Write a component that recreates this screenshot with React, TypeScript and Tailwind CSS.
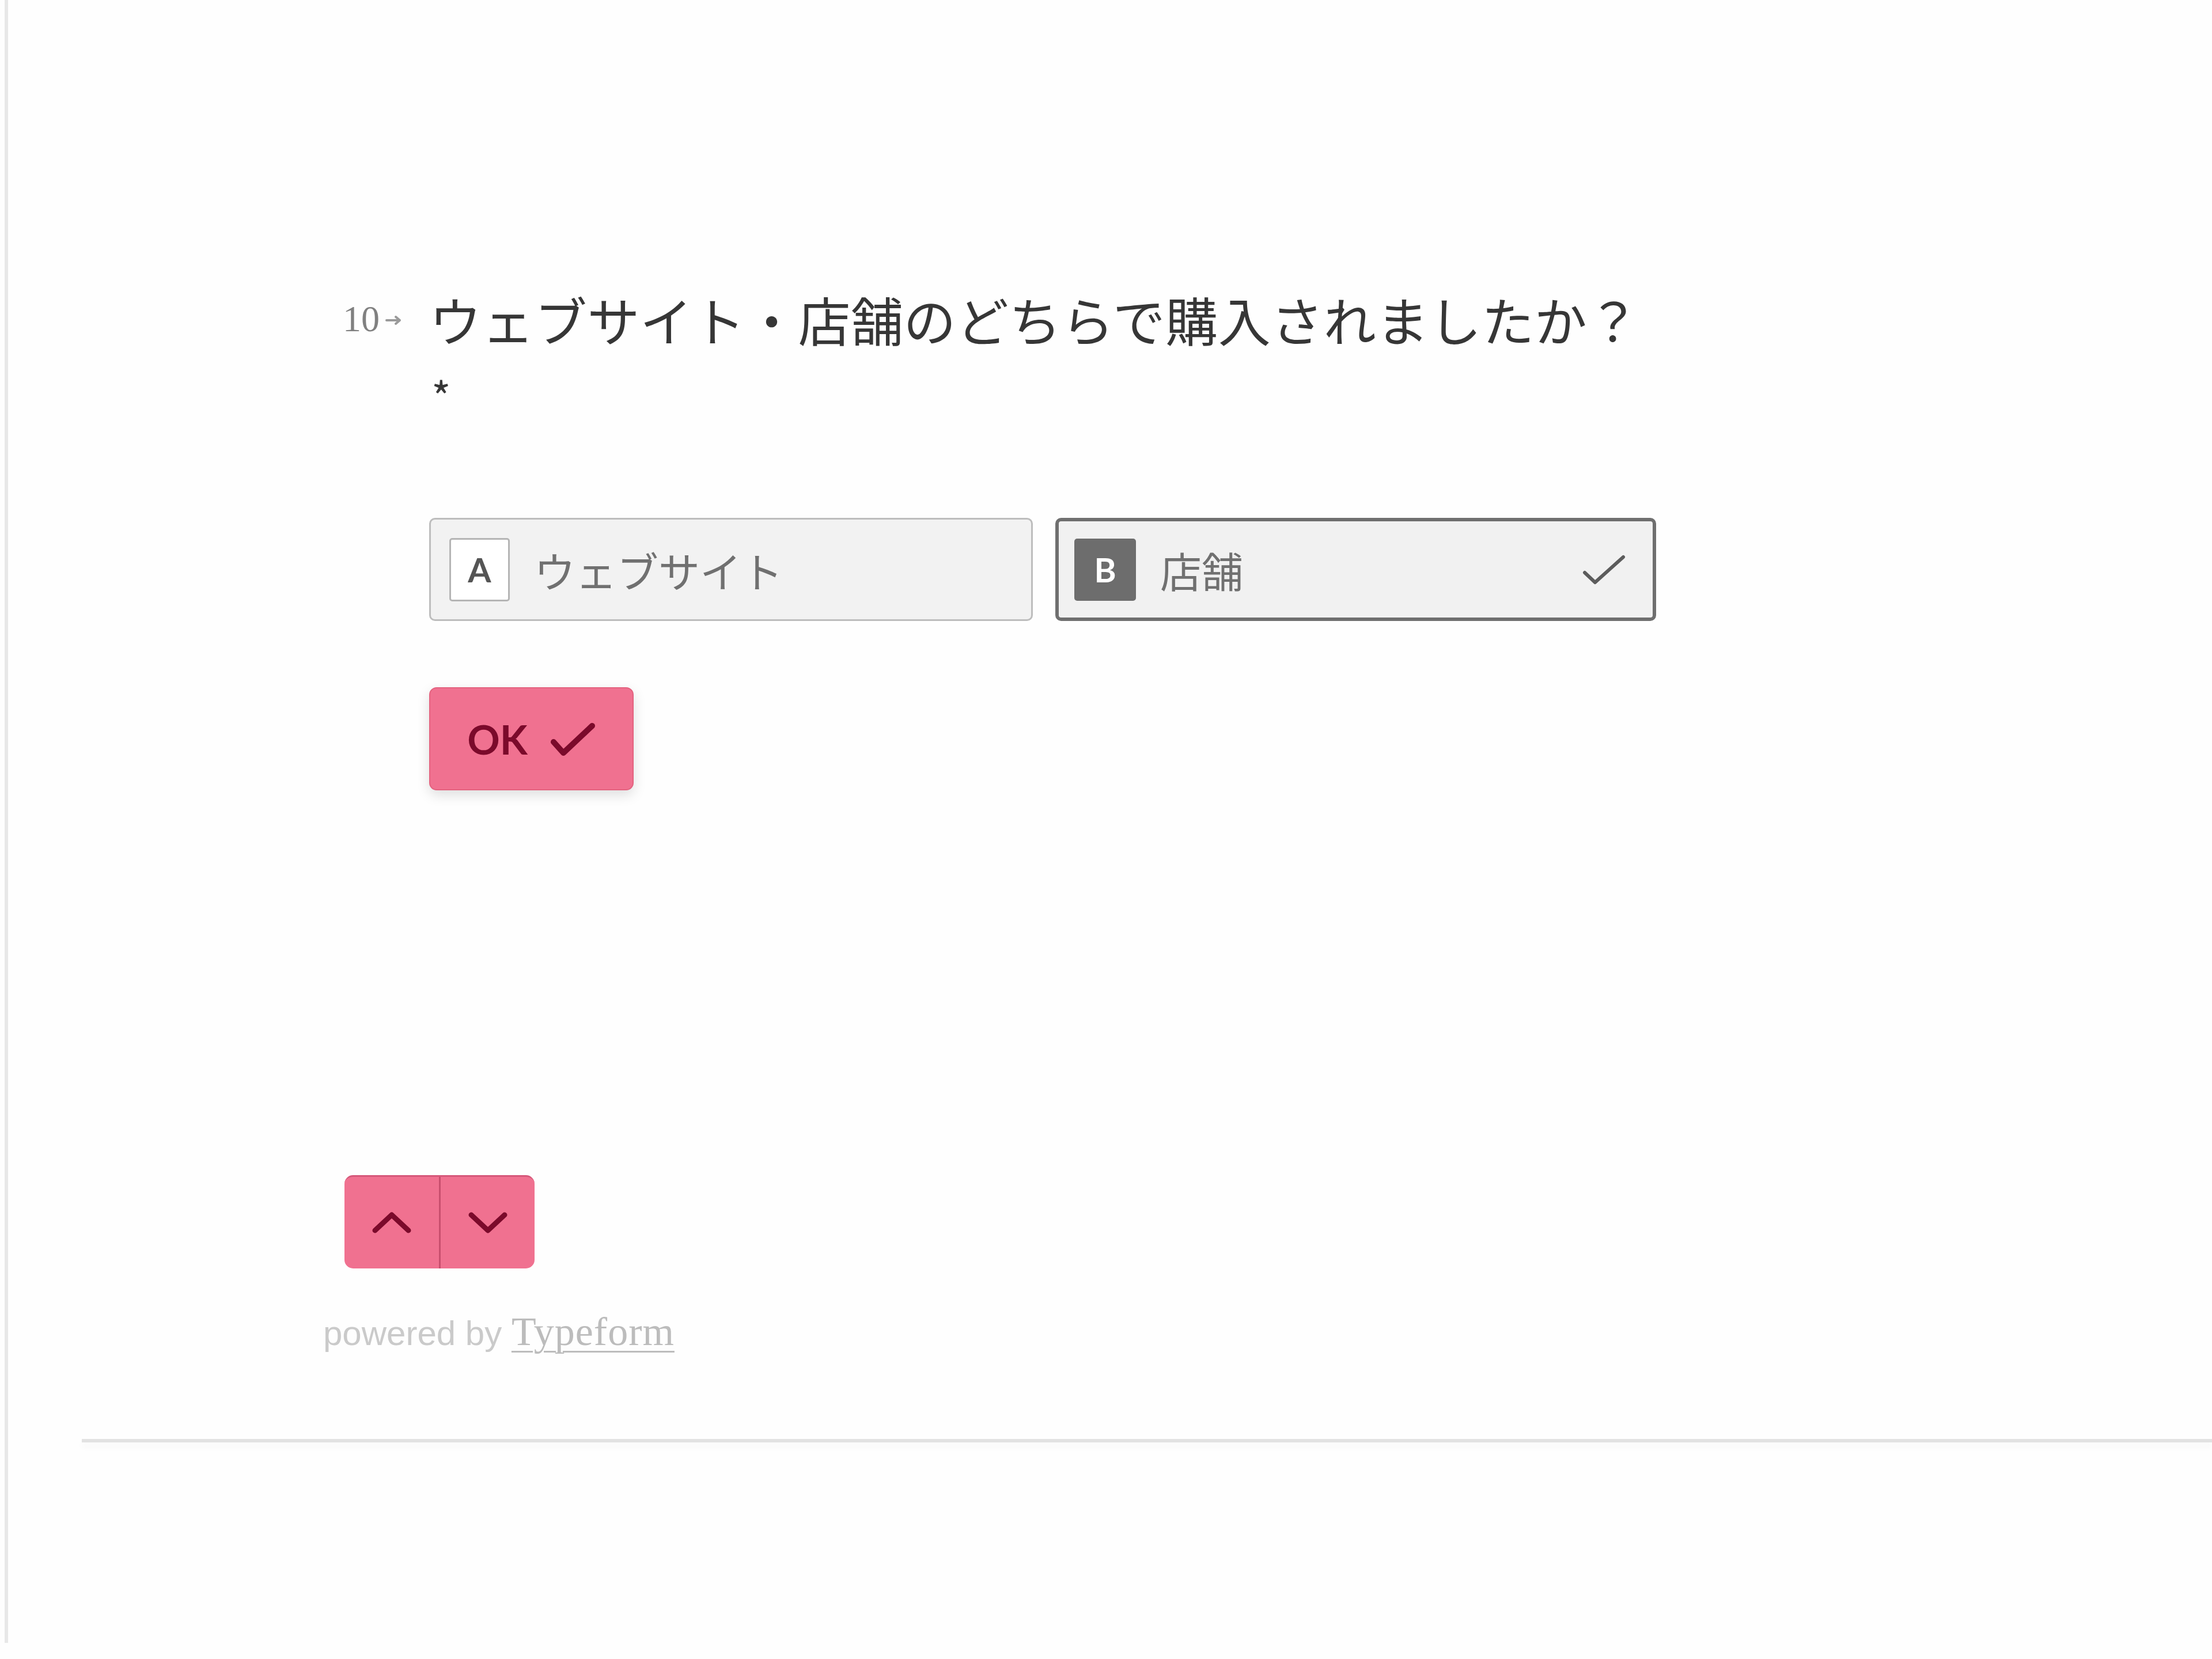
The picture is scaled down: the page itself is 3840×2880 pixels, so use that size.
const jp = "font-['Noto_Sans_CJK_JP','Noto_Sans',sans-serif]";

function Check({ className }: { className: string }) {
  return (
    <svg width="75" height="52" viewBox="0 0 75 52" className={className}>
      <path d="M4 31 L22 48 L71 4" fill="none" stroke="currentColor" strokeWidth="6" strokeLinecap="round" strokeLinejoin="round" />
    </svg>
  );
}

function Choice({ letter, label, selected }: { letter: string; label: string; selected?: boolean }) {
  return (
    <div
      className={
        selected
          ? "w-[1043px] h-[179px] flex items-center rounded-[10px] border-[6px] border-[#6f6f6f] bg-[#f1f1f1] pl-[27px] pr-[47px]"
          : "w-[1048px] h-[179px] flex items-center rounded-[10px] border-[3px] border-[#bdbdbd] bg-[#f2f2f2] pl-[32px] pr-[47px]"
      }
    >
      <div
        className={
          selected
            ? "w-[107px] h-[108px] flex items-center justify-center rounded-[5px] bg-[#6d6d6d] text-white"
            : "w-[105px] h-[110px] flex items-center justify-center rounded-[5px] border-[3px] border-[#b5b5b5] bg-white text-[#555]"
        }
      >
        <span className="font-['Lato',sans-serif] font-bold text-[58px] leading-none">{letter}</span>
      </div>
      <span className={`${jp} ml-[42px] text-[72px] leading-none text-[#707070]`}>{label}</span>
      {selected && <Check className="ml-auto text-[#5c5c5c]" />}
    </div>
  );
}

export default function App() {
  return (
    <div className="w-[3840px] min-h-[2880px] bg-[#fefefe] flex">
      <div className="ml-[8px] w-[6px] h-[2852px] bg-[#e8e8e8]" />

      <div className="flex-1 flex flex-col">
        <div className="pl-[581px] pt-[488px] flex flex-col items-start">
          {/* question */}
          <div className="flex items-start">
            <div className="w-[150px] h-[130px] flex items-center pt-[2px] text-[#808080]">
              <span className="font-['Liberation_Serif',serif] text-[64px] leading-none">10</span>
              <svg width="30" height="20" viewBox="0 0 30 20" className="ml-[10px] mt-[4px]">
                <path d="M2 10 H25 M18 4 L25 10 L18 16" fill="none" stroke="#9a9a9a" strokeWidth="4" strokeLinecap="round" strokeLinejoin="round" />
              </svg>
            </div>
            <div className={`${jp} text-[91px] leading-[130px] text-[#363636] whitespace-nowrap`}>
              <p className="tracking-[0.5px]">ウェブサイト・店舗のどちらで購入されましたか？</p>
              <p className="text-[72px] pl-[4px] pt-[6px] leading-[124px]">*</p>
            </div>
          </div>

          {/* choices */}
          <div className="ml-[150px] mt-[151px] flex gap-[39px]">
            <Choice letter="A" label="ウェブサイト" />
            <Choice letter="B" label="店舗" selected />
          </div>

          {/* ok */}
          <button className="ml-[150px] mt-[115px] w-[355px] h-[179px] flex items-center justify-center gap-[40px] rounded-[13px] border-[2px] border-[#e4627f] bg-[#f07190] text-[#7b0a2b] shadow-[0_8px_22px_rgba(0,0,0,0.13)]">
            <span className="font-['Lato',sans-serif] font-bold text-[70px] leading-none">OK</span>
            <svg width="78" height="58" viewBox="0 0 78 58" className="mt-[2px]">
              <path d="M5 33 L22 52 L72 5" fill="none" stroke="currentColor" strokeWidth="10" strokeLinecap="round" strokeLinejoin="round" />
            </svg>
          </button>

          {/* nav */}
          <div className="ml-[3px] mt-[668px] w-[330px] h-[162px] flex rounded-[15px] border-t-[3px] border-[#d5587a] bg-[#f07190] text-[#7b0a2b] overflow-hidden">
            <div className="w-[167px] flex items-center justify-center border-r-[3px] border-[#c94f6e]">
              <svg width="68" height="37" viewBox="0 0 68 37">
                <path d="M5 32 L34 5 L63 32" fill="none" stroke="currentColor" strokeWidth="9" strokeLinecap="round" strokeLinejoin="round" />
              </svg>
            </div>
            <div className="flex-1 flex items-center justify-center">
              <svg width="68" height="37" viewBox="0 0 68 37">
                <path d="M5 5 L34 32 L63 5" fill="none" stroke="currentColor" strokeWidth="9" strokeLinecap="round" strokeLinejoin="round" />
              </svg>
            </div>
          </div>

          {/* powered by */}
          <p className="-ml-[34px] mt-[75px] leading-[70px] whitespace-nowrap">
            <span className="font-['Liberation_Sans',sans-serif] text-[60px] text-[#cacaca]">powered by </span>
            <span className="font-['Liberation_Serif',serif] text-[70px] tracking-[1px] text-[#bcbcbc] underline decoration-[3px] underline-offset-[10px]">Typeform</span>
          </p>
        </div>

        <div className="ml-[128px] mt-[134px] h-[6px] bg-[#e2e2e2] shadow-[0_8px_12px_rgba(0,0,0,0.04)]" />
      </div>
    </div>
  );
}
